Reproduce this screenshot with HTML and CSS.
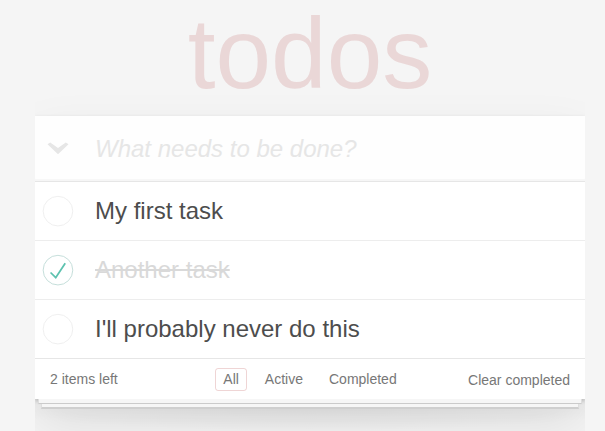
FILE: index.html
```html
<!DOCTYPE html>
<html lang="en">
<head>
<meta charset="utf-8">
<title>todos</title>
<link rel="stylesheet" href="styles.css">
</head>
<body>
<h1 class="title">todos</h1>
<section class="todoapp">
  <header class="header">
    <span class="toggle-all">
      <svg width="22" height="14" viewBox="0 0 22 14"><path d="M0.5 2.3 L3.2 0.4 L11 6.1 L18.8 0.4 L21.5 2.3 L11 12.2 Z" fill="#e6e6e6"/></svg>
    </span>
    <input class="new-todo" placeholder="What needs to be done?">
  </header>
  <ul class="todo-list">
    <li class="todo">
      <span class="toggle"><svg width="40" height="40" viewBox="-10 -18 100 135"><circle cx="50" cy="50" r="50" fill="none" stroke="#ededed" stroke-width="3"/></svg></span>
      <label class="todo-label">My first task</label>
    </li>
    <li class="todo completed">
      <span class="toggle"><svg width="40" height="40" viewBox="-10 -18 100 135"><circle cx="50" cy="50" r="50" fill="none" stroke="#bddad5" stroke-width="3"/><path fill="#5dc2af" d="M72 25L42 71 27 56l-4 4 20 20 34-52z"/></svg></span>
      <label class="todo-label">Another task</label>
    </li>
    <li class="todo">
      <span class="toggle"><svg width="40" height="40" viewBox="-10 -18 100 135"><circle cx="50" cy="50" r="50" fill="none" stroke="#ededed" stroke-width="3"/></svg></span>
      <label class="todo-label">I'll probably never do this</label>
    </li>
  </ul>
  <footer class="footer">
    <span class="todo-count"><strong class="count">2</strong> items left</span>
    <ul class="filters">
      <li><a class="filter selected" href="#/">All</a></li>
      <li><a class="filter" href="#/active">Active</a></li>
      <li><a class="filter" href="#/completed">Completed</a></li>
    </ul>
    <button class="clear-completed">Clear completed</button>
  </footer>
</section>
</body>
</html>
```
FILE: styles.css
```css
html {
  margin: 0;
  padding: 0;
  min-height: 100%;
  background: #f5f5f5;
}
body {
  margin: 0 0 0 35px;
  padding: 0 0 32px;
  font: 14px "Liberation Sans", Arial, sans-serif;
  line-height: 1.4em;
  color: #4d4d4d;
  width: 550px;
}
.title {
  margin: 3px 0 13px;
  font-size: 100px;
  line-height: 100px;
  font-weight: normal;
  text-align: center;
  color: rgba(175, 47, 47, 0.15);
}
.todoapp {
  position: relative;
  background: #fff;
  box-shadow: 0 2px 4px 0 rgba(0,0,0,0.2), 0 25px 50px 0 rgba(0,0,0,0.1);
}
/* stacked paper sheets under the card */
.todoapp::before,
.todoapp::after {
  content: '';
  position: absolute;
  top: 100%;
  background: #f6f6f6;
  box-sizing: border-box;
}
.todoapp::before {
  left: 6px;
  right: 6px;
  height: 10px;
  border: 1px solid #dedede;
  border-top: 0;
  border-bottom: 2px solid #cfcfcf;
}
.todoapp::after {
  left: 3px;
  right: 3px;
  height: 5px;
  border: 1px solid #dedede;
  border-top: 0;
  border-bottom: 1px solid #cbcbcb;
}
.header {
  display: flex;
  align-items: center;
  height: 65px;
  background: rgba(0,0,0,0.003);
  box-shadow: inset 0 -2px 1px rgba(0,0,0,0.03);
}
.toggle-all {
  width: 60px;
  display: flex;
  align-items: center;
  padding-left: 12px;
  box-sizing: border-box;
  flex: none;
}
.toggle-all svg { display: block; }
.new-todo {
  flex: 1;
  min-width: 0;
  border: none;
  outline: none;
  background: transparent;
  margin: 0;
  padding: 0 16px 0 0;
  font: 24px "Liberation Sans", Arial, sans-serif;
  line-height: 33px;
  height: 33px;
  color: inherit;
}
.new-todo::placeholder {
  font-style: italic;
  color: #e6e6e6;
}
.todo-list {
  margin: 0;
  padding: 0;
  list-style: none;
  border-top: 1px solid #e6e6e6;
}
.todo {
  display: flex;
  align-items: center;
  font-size: 24px;
  border-bottom: 1px solid #ededed;
}
.todo:last-child {
  border-bottom: none;
}
.toggle {
  width: 40px;
  height: 40px;
  flex: none;
}
.toggle svg { display: block; }
.todo-label {
  flex: 1;
  padding: 15px 15px 15px 20px;
  line-height: 28px;
  color: #4d4d4d;
  word-break: break-all;
}
.completed .todo-label {
  color: #d9d9d9;
  text-decoration: line-through;
}
.footer {
  position: relative;
  display: grid;
  grid-template-columns: 1fr auto 1fr;
  align-items: center;
  height: 20px;
  padding: 9px 15px 11px;
  color: #777;
  border-top: 1px solid #e6e6e6;
}
/* soft shadow falling below the stacked sheets */
.footer::after {
  content: '';
  position: absolute;
  left: -30px;
  right: -30px;
  top: 100%;
  height: 32px;
  z-index: -1;
  background: radial-gradient(ellipse 60% 100% at 50% 0, rgba(0,0,0,0.08), rgba(0,0,0,0) 100%);
  pointer-events: none;
}
.todo-count {
  text-align: left;
}
.count { font-weight: normal; }
.filters {
  margin: 0;
  padding: 0;
  list-style: none;
  display: flex;
  gap: 4px;
}
.filters li { display: block; }
.filter {
  display: block;
  color: inherit;
  margin: 0 3px;
  padding: 0 7px;
  line-height: 21px;
  text-decoration: none;
  border: 1px solid transparent;
  border-radius: 3px;
}
.filter.selected {
  border-color: rgba(175, 47, 47, 0.2);
}
.clear-completed {
  justify-self: end;
  margin: 0;
  padding: 0;
  border: 0;
  background: none;
  font: inherit;
  line-height: 20px;
  color: inherit;
  cursor: pointer;
}
```
